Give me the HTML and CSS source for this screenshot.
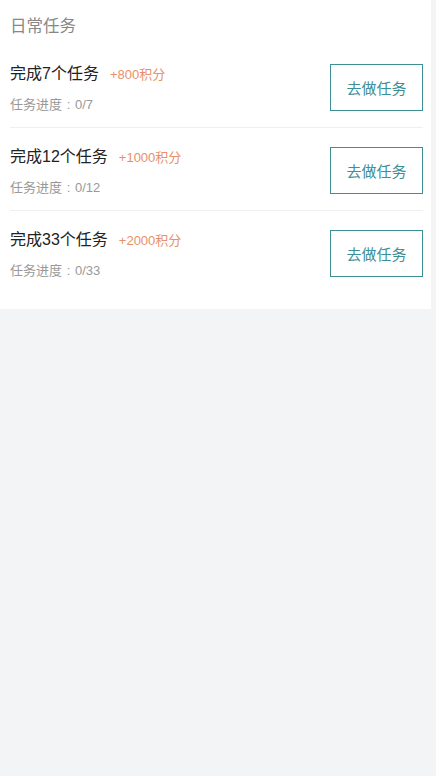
FILE: index.html
```html
<!DOCTYPE html>
<html lang="zh">
<head>
<meta charset="utf-8">
<link rel="stylesheet" href="styles.css">
</head>
<body>
<div class="page">
  <section class="card">
    <h2 class="card-title">日常任务</h2>
    <div class="task">
      <div class="task-info">
        <div class="task-name">完成7个任务<span class="task-points">+800积分</span></div>
        <div class="task-progress">任务进度<span class="colon">:</span>0/7</div>
      </div>
      <button class="task-btn">去做任务</button>
    </div>
    <div class="task">
      <div class="task-info">
        <div class="task-name">完成12个任务<span class="task-points">+1000积分</span></div>
        <div class="task-progress">任务进度<span class="colon">:</span>0/12</div>
      </div>
      <button class="task-btn">去做任务</button>
    </div>
    <div class="task">
      <div class="task-info">
        <div class="task-name">完成33个任务<span class="task-points">+2000积分</span></div>
        <div class="task-progress">任务进度<span class="colon">:</span>0/33</div>
      </div>
      <button class="task-btn">去做任务</button>
    </div>
  </section>
</div>
</body>
</html>
```
FILE: styles.css
```css
html, body {
  margin: 0;
  padding: 0;
  background: #f3f4f6;
  font-family: "Liberation Sans", "Noto Sans CJK SC", sans-serif;
}
.page {
  width: 431px;
  min-height: 776px;
}
.card {
  background: #ffffff;
  padding: 0 0 16px 0;
}
.card-title {
  margin: 0;
  height: 45px;
  padding-left: 10px;
  font-size: 16.5px;
  font-weight: normal;
  line-height: 52px;
  color: #888888;
}
.task {
  display: flex;
  justify-content: space-between;
  align-items: flex-start;
  margin-left: 10px;
  margin-right: 8px;
  padding: 17px 0 14px 0;
  border-bottom: 1px solid #efefef;
}
.task:last-child {
  border-bottom: none;
}
.task-info {
  display: flex;
  flex-direction: column;
}
.task-name {
  height: 24px;
  font-size: 16px;
  line-height: 24px;
  color: #222222;
}
.task-points {
  font-size: 13px;
  color: #e8906a;
  margin-left: 11px;
}
.task-progress {
  height: 16px;
  margin-top: 11px;
  font-size: 13px;
  line-height: 16px;
  color: #999999;
}
.colon {
  display: inline-block;
  width: 13px;
  text-align: center;
}
.task-btn {
  margin-top: 2px;
  width: 93px;
  height: 47px;
  background: #ffffff;
  border: 1px solid #3d8f96;
  border-radius: 0;
  color: #3d8f96;
  font-family: "Liberation Sans", "Noto Sans CJK SC", sans-serif;
  font-size: 15px;
  padding: 0;
}
```
